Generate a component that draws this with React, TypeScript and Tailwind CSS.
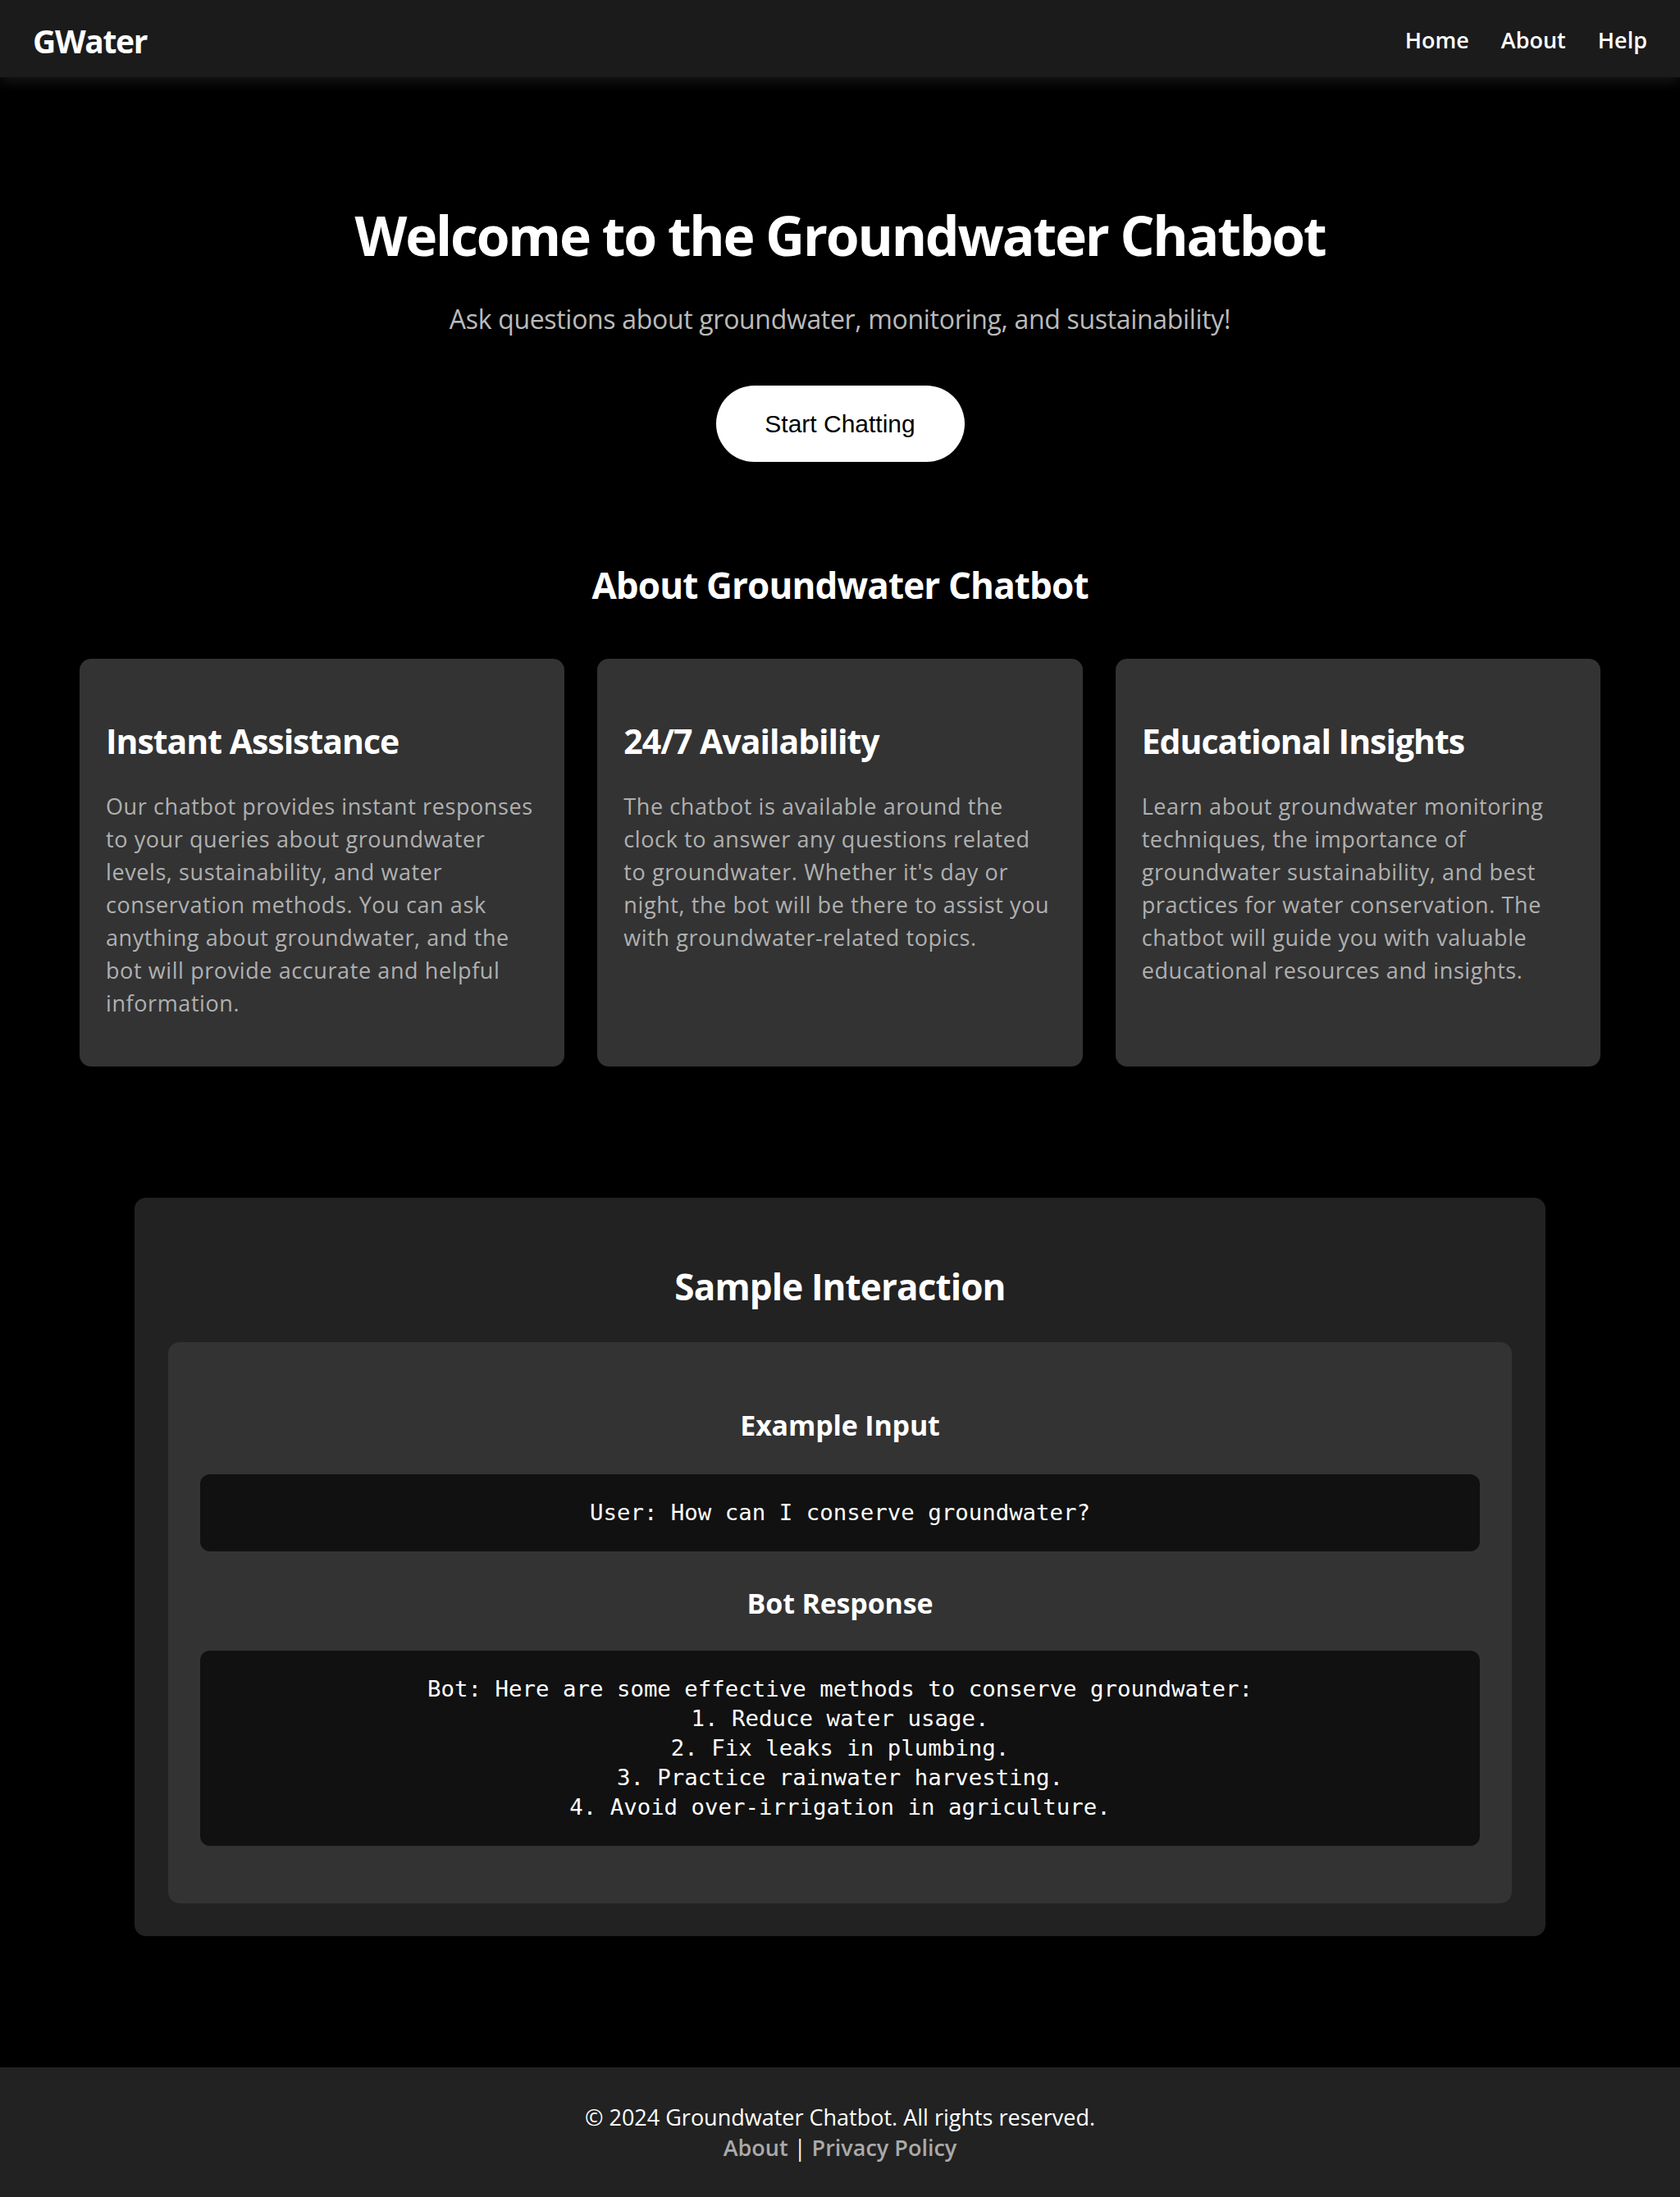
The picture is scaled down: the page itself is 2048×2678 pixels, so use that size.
const features = [
  {
    title: "Instant Assistance",
    body: "Our chatbot provides instant responses to your queries about groundwater levels, sustainability, and water conservation methods. You can ask anything about groundwater, and the bot will provide accurate and helpful information.",
  },
  {
    title: "24/7 Availability",
    body: "The chatbot is available around the clock to answer any questions related to groundwater. Whether it's day or night, the bot will be there to assist you with groundwater-related topics.",
  },
  {
    title: "Educational Insights",
    body: "Learn about groundwater monitoring techniques, the importance of groundwater sustainability, and best practices for water conservation. The chatbot will guide you with valuable educational resources and insights.",
  },
];

const botReply = `Bot: Here are some effective methods to conserve groundwater:
1. Reduce water usage.
2. Fix leaks in plumbing.
3. Practice rainwater harvesting.
4. Avoid over-irrigation in agriculture.`;

function Navbar() {
  return (
    <header className="relative z-10 flex h-[94px] items-center justify-between bg-[#1b1b1b] px-[40px] pt-[5px] shadow-[0_6px_14px_rgba(24,24,24,0.9)]">
      <a href="#" className="text-[39px] font-bold leading-none tracking-[-0.035em] text-white">
        GWater
      </a>
      <nav>
        <ul className="flex items-center gap-[39px] text-[27px] font-semibold text-white">
          <li><a href="#">Home</a></li>
          <li><a href="#">About</a></li>
          <li><a href="#">Help</a></li>
        </ul>
      </nav>
    </header>
  );
}

function Hero() {
  return (
    <section className="flex flex-col items-center pt-[151px] text-center">
      <h1 className="text-[66px] font-bold leading-[82px] tracking-[-0.033em] text-white">
        Welcome to the Groundwater Chatbot
      </h1>
      <p className="mt-[39px] text-[32px] leading-[46px] tracking-[-0.01em] text-[#bbbbbb]">
        Ask questions about groundwater, monitoring, and sustainability!
      </p>
      <button className="mt-[58px] h-[93px] w-[303px] rounded-full bg-white font-['Liberation_Sans',Arial,sans-serif] text-[30px] text-black">
        Start Chatting
      </button>
    </section>
  );
}

function About() {
  return (
    <section className="px-[97px] pt-[120px]">
      <h2 className="text-center text-[44px] font-bold leading-[60px] tracking-[-0.02em] text-white">
        About Groundwater Chatbot
      </h2>
      <div className="mt-[60px] grid grid-cols-3 gap-[40px]">
        {features.map((f) => (
          <div key={f.title} className="rounded-[14px] bg-[#333333] px-[32px] pt-[34px] pb-[34px]">
            <h3 className="mt-[39px] text-[41px] font-bold leading-[54px] tracking-[-0.025em] text-white">
              {f.title}
            </h3>
            <p className="mt-[33px] mb-[23px] text-[27px] leading-[40px] tracking-[0.022em] text-[#b0b0b0]">
              {f.body}
            </p>
          </div>
        ))}
      </div>
    </section>
  );
}

function CodeBox({ children }: { children: string }) {
  return (
    <pre className="rounded-[12px] bg-[#111111] px-[27px] py-[29px] text-center font-['DejaVu_Sans_Mono',monospace] text-[27.4px] leading-[36px] whitespace-pre-wrap text-white">
      {children}
    </pre>
  );
}

function SampleInteraction() {
  return (
    <section className="mx-auto mt-[160px] w-[1720px] rounded-[14px] bg-[#222222] px-[41px] pt-[78px] pb-[40px]">
      <h2 className="text-center text-[44px] font-bold leading-[60px] tracking-[-0.02em] text-white">
        Sample Interaction
      </h2>
      <div className="mt-[38px] rounded-[14px] bg-[#333333] px-[39px] pt-[78px] pb-[70px]">
        <h3 className="text-center text-[34px] font-bold leading-[46px] tracking-[-0.005em] text-white">
          Example Input
        </h3>
        <div className="mt-[37px]">
          <CodeBox>User: How can I conserve groundwater?</CodeBox>
        </div>
        <h3 className="mt-[40px] text-center text-[34px] font-bold leading-[46px] tracking-[-0.005em] text-white">
          Bot Response
        </h3>
        <div className="mt-[35px]">
          <CodeBox>{botReply}</CodeBox>
        </div>
      </div>
    </section>
  );
}

function Footer() {
  return (
    <footer className="mt-[160px] bg-[#222222] pt-[42px] pb-[44px] text-center text-[27px] leading-[37px] text-white">
      <p>© 2024 Groundwater Chatbot. All rights reserved.</p>
      <p>
        <a href="#" className="font-semibold text-[#aaaaaa]">About</a> |{" "}
        <a href="#" className="font-semibold text-[#aaaaaa]">Privacy Policy</a>
      </p>
    </footer>
  );
}

export default function App() {
  return (
    <div className="min-h-screen bg-black font-['Open_Sans',sans-serif]">
      <Navbar />
      <Hero />
      <About />
      <SampleInteraction />
      <Footer />
    </div>
  );
}
